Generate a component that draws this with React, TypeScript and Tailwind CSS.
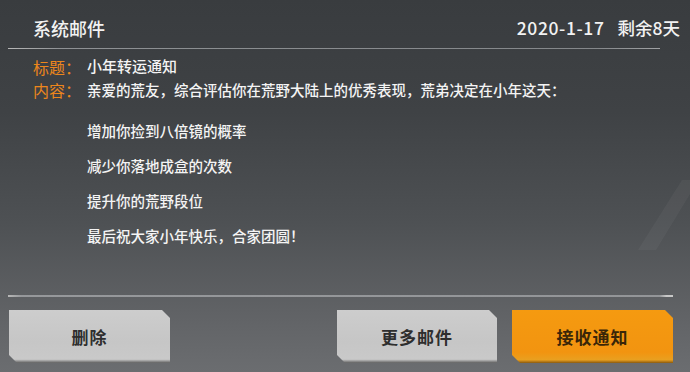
import React from "react";

const font = { fontFamily: '"Noto Sans CJK SC", "Noto Sans", sans-serif' };

function Btn({ label, orange, className }: { label: string; orange?: boolean; className?: string }) {
  return (
    <div
      className={
        "h-[53px] flex items-center justify-center [clip-path:polygon(0_0,calc(100%-8px)_0,100%_8px,100%_100%,8px_100%,0_calc(100%-8px))] " +
        (orange
          ? "bg-[linear-gradient(180deg,#f59a10_0%,#f29410_80%,#e9a020_94%,#8a5a10_100%)] text-[#3a2608] "
          : "bg-[linear-gradient(180deg,#cdcdcd_0%,#c6c6c6_60%,#c9c9c9_93%,#5e5e5e_100%)] text-[#2e2e2e] ") +
        (className || "")
      }
    >
      <span className="text-[17px] font-bold tracking-[1px]">{label}</span>
    </div>
  );
}

export default function App() {
  const items = [
    "增加你捡到八倍镜的概率",
    "减少你落地成盒的次数",
    "提升你的荒野段位",
    "最后祝大家小年快乐，合家团圆！",
  ];
  return (
    <div
      style={font}
      className="relative w-[690px] h-[372px] overflow-hidden flex flex-col bg-[linear-gradient(180deg,#393c3f_0%,#3f4245_30%,#4e5154_60%,#616366_85%,#6b6d70_100%)] text-white"
    >
      <svg className="absolute right-0 top-[180px] pointer-events-none" width="70" height="120" viewBox="0 0 70 120">
        <polygon points="62,0 70,0 70,14 36,70 18,70" fill="#ffffff" opacity="0.04" />
      </svg>
      <div className="h-[48px] flex items-center justify-between pl-[33px] pr-[10px] pt-[8px]">
        <span className="text-[18px] font-medium text-[#f2f2f2]">系统邮件</span>
        <span className="flex items-center gap-[13px] text-[17.5px] font-medium text-[#f2f2f2]">
          <span className="tracking-[0.6px]">2020-1-17</span>
          <span>剩余8天</span>
        </span>
      </div>
      <div className="mx-[8px] h-px bg-[linear-gradient(90deg,#b8b8b8_0%,#8e9194_8%,#84878a_90%,#a0a2a4_100%)] mr-[30px]" />
      <div className="pl-[33px] pt-[6px]">
        <div className="flex items-center h-[23px]">
          <span className="text-[16px] text-[#ec861c] w-[54px]">标题：</span>
          <span className="text-[15px] font-medium text-[#f4f4f4]">小年转运通知</span>
        </div>
        <div className="flex items-center h-[24px]">
          <span className="text-[16px] text-[#ec861c] w-[54px]">内容：</span>
          <span className="text-[14.5px] font-medium text-[#f4f4f4]">
            亲爱的荒友，综合评估你在荒野大陆上的优秀表现，荒弟决定在小年这天：
          </span>
        </div>
      </div>
      <div className="pl-[87px] pt-[17px] flex flex-col gap-[11px]">
        {items.map((t) => (
          <div key={t} className="h-[24px] flex items-center text-[14.5px] font-medium text-[#f4f4f4]">
            {t}
          </div>
        ))}
      </div>
      <div className="flex-1" />
      <div className="mx-[8px] mr-[17px] h-[2px] bg-[linear-gradient(90deg,#b8b8b8_0%,#96989b_2%,#939598_98%,#c8c8c8_99%)]" />
      <div className="flex items-start pl-[9px] pt-[13px] pb-[9px]">
        <Btn label="删除" className="w-[161px]" />
        <div className="w-[167px]" />
        <Btn label="更多邮件" className="w-[160px]" />
        <div className="w-[15px]" />
        <Btn label="接收通知" orange className="w-[161px]" />
      </div>
    </div>
  );
}
